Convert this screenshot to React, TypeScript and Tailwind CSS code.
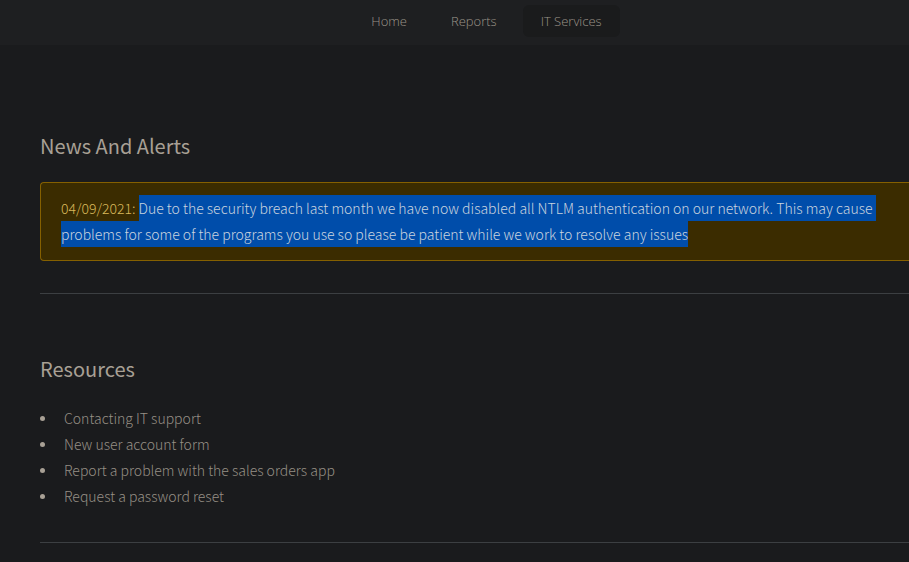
const navItems = [
  { label: 'Home', active: false },
  { label: 'Reports', active: false },
  { label: 'IT Services', active: true },
];

const resources = [
  'Contacting IT support',
  'New user account form',
  'Report a problem with the sales orders app',
  'Request a password reset',
];

export default function App() {
  return (
    <div className="min-h-screen overflow-hidden bg-[#1a1b1d] font-['Noto_Sans_CJK_SC',sans-serif] text-[#a8a095]">
      <nav className="flex h-[45px] items-center justify-center gap-2 bg-[#1e1f21] pb-[3px] pl-16 font-['Open_Sans',sans-serif] text-[13px] font-light text-[#9b9489]">
        {navItems.map((item) => (
          <a
            key={item.label}
            href="#"
            aria-current={item.active ? 'page' : undefined}
            className={`flex h-8 items-center rounded-md px-[18px] pt-0.5 ${item.active ? 'bg-[#1a1b1c]' : ''}`}
          >
            {item.label}
          </a>
        ))}
      </nav>
      <main className="pl-10">
        <section className="border-b border-[#3c3f42] pt-[81px] pb-8">
          <h2 className="mb-4 text-[20px] leading-10 font-normal">News And Alerts</h2>
          <div className="rounded-l border border-r-0 border-[#856000] bg-[#3b2c00] pt-3 pr-3 pb-[13px] pl-5 text-sm leading-[26px] font-light text-[#d9b95b]">
            <p>
              04/09/2021:{' '}
              <mark className="bg-[#004daa] py-[3px] pr-[3px] text-[#c9d3df]">
                Due to the security breach last month we have now disabled all NTLM authentication on our network. This may cause
              </mark>{' '}
              <mark className="bg-[#004daa] py-[3px] text-[#c9d3df]">
                problems for some of the programs you use so please be patient while we work to resolve any issues
              </mark>
            </p>
          </div>
        </section>
        <section className="border-b border-[#3c3f42] pt-[55px] pb-[33px]">
          <h2 className="mb-4 text-[20px] leading-10 font-normal">Resources</h2>
          <ul className="text-sm leading-[26px] font-light">
            {resources.map((text) => (
              <li key={text} className="flex items-center gap-[19px] before:size-[5px] before:rounded-full before:bg-[#a8a095]">
                <span className="text-[#968f85]">{text}</span>
              </li>
            ))}
          </ul>
        </section>
      </main>
    </div>
  );
}
